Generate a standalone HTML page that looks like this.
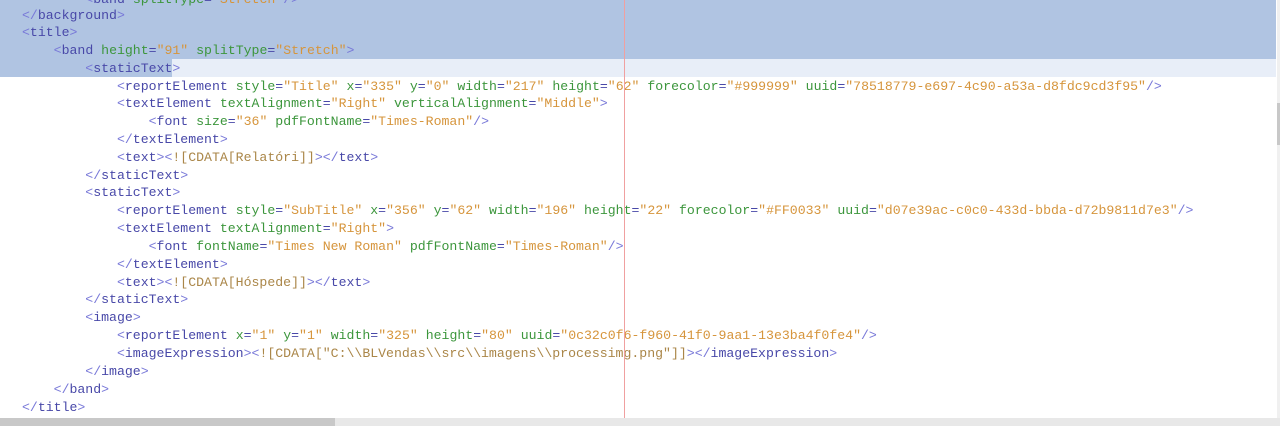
<!DOCTYPE html>
<html><head><meta charset="utf-8"><style>
html,body{margin:0;padding:0;width:1280px;height:426px;overflow:hidden;background:#fff;position:relative}
.sel{position:absolute;left:0;top:0;width:1276px;height:59px;background:#b0c4e2}
.sel2{position:absolute;left:0;top:59px;width:1276px;height:18px;background:#e8eef8}
.sel3{position:absolute;left:0;top:59px;width:172px;height:18px;background:#b0c4e2}
.l{position:absolute;left:22px;font-family:"Liberation Mono","Courier New",monospace;font-size:13.2px;line-height:18px;white-space:pre;color:#4848a8}
.b{color:#7878d8}.a{color:#3c963c}.v{color:#d6953c}.c{color:#aa8648}
.red{position:absolute;left:624px;top:0;width:1px;height:418px;background:#f0a0a0}
.hs{position:absolute;left:0;top:418px;width:1280px;height:8px;background:#e8e8e8}
.ht{position:absolute;left:0;top:418px;width:335px;height:8px;background:#c8c8c8}
.vs{position:absolute;left:1277px;top:0;width:3px;height:418px;background:#f0f0f0}
.vt{position:absolute;left:1277px;top:103px;width:3px;height:42px;background:#c8c8c8}
</style></head><body>
<div class="sel"></div><div class="sel2"></div><div class="sel3"></div>
<div class="l" style="top:-9px"><span class="b">        &lt;</span>band <span class="a">splitType</span>=<span class="v">"Stretch"</span><span class="b">/&gt;</span></div>
<div class="l" style="top:7px"><span class="b">&lt;/</span>background<span class="b">&gt;</span></div>
<div class="l" style="top:24px"><span class="b">&lt;</span>title<span class="b">&gt;</span></div>
<div class="l" style="top:42px"><span class="b">    &lt;</span>band <span class="a">height</span>=<span class="v">"91"</span> <span class="a">splitType</span>=<span class="v">"Stretch"</span><span class="b">&gt;</span></div>
<div class="l" style="top:60px"><span class="b">        &lt;</span>staticText<span class="b">&gt;</span></div>
<div class="l" style="top:78px"><span class="b">            &lt;</span>reportElement <span class="a">style</span>=<span class="v">"Title"</span> <span class="a">x</span>=<span class="v">"335"</span> <span class="a">y</span>=<span class="v">"0"</span> <span class="a">width</span>=<span class="v">"217"</span> <span class="a">height</span>=<span class="v">"62"</span> <span class="a">forecolor</span>=<span class="v">"#999999"</span> <span class="a">uuid</span>=<span class="v">"78518779-e697-4c90-a53a-d8fdc9cd3f95"</span><span class="b">/&gt;</span></div>
<div class="l" style="top:95px"><span class="b">            &lt;</span>textElement <span class="a">textAlignment</span>=<span class="v">"Right"</span> <span class="a">verticalAlignment</span>=<span class="v">"Middle"</span><span class="b">&gt;</span></div>
<div class="l" style="top:113px"><span class="b">                &lt;</span>font <span class="a">size</span>=<span class="v">"36"</span> <span class="a">pdfFontName</span>=<span class="v">"Times-Roman"</span><span class="b">/&gt;</span></div>
<div class="l" style="top:131px"><span class="b">            &lt;/</span>textElement<span class="b">&gt;</span></div>
<div class="l" style="top:149px"><span class="b">            &lt;</span>text<span class="b">&gt;&lt;</span><span class="c">![CDATA[Relatóri]]</span><span class="b">&gt;&lt;/</span>text<span class="b">&gt;</span></div>
<div class="l" style="top:167px"><span class="b">        &lt;/</span>staticText<span class="b">&gt;</span></div>
<div class="l" style="top:184px"><span class="b">        &lt;</span>staticText<span class="b">&gt;</span></div>
<div class="l" style="top:202px"><span class="b">            &lt;</span>reportElement <span class="a">style</span>=<span class="v">"SubTitle"</span> <span class="a">x</span>=<span class="v">"356"</span> <span class="a">y</span>=<span class="v">"62"</span> <span class="a">width</span>=<span class="v">"196"</span> <span class="a">height</span>=<span class="v">"22"</span> <span class="a">forecolor</span>=<span class="v">"#FF0033"</span> <span class="a">uuid</span>=<span class="v">"d07e39ac-c0c0-433d-bbda-d72b9811d7e3"</span><span class="b">/&gt;</span></div>
<div class="l" style="top:220px"><span class="b">            &lt;</span>textElement <span class="a">textAlignment</span>=<span class="v">"Right"</span><span class="b">&gt;</span></div>
<div class="l" style="top:238px"><span class="b">                &lt;</span>font <span class="a">fontName</span>=<span class="v">"Times New Roman"</span> <span class="a">pdfFontName</span>=<span class="v">"Times-Roman"</span><span class="b">/&gt;</span></div>
<div class="l" style="top:256px"><span class="b">            &lt;/</span>textElement<span class="b">&gt;</span></div>
<div class="l" style="top:274px"><span class="b">            &lt;</span>text<span class="b">&gt;&lt;</span><span class="c">![CDATA[Hóspede]]</span><span class="b">&gt;&lt;/</span>text<span class="b">&gt;</span></div>
<div class="l" style="top:291px"><span class="b">        &lt;/</span>staticText<span class="b">&gt;</span></div>
<div class="l" style="top:309px"><span class="b">        &lt;</span>image<span class="b">&gt;</span></div>
<div class="l" style="top:327px"><span class="b">            &lt;</span>reportElement <span class="a">x</span>=<span class="v">"1"</span> <span class="a">y</span>=<span class="v">"1"</span> <span class="a">width</span>=<span class="v">"325"</span> <span class="a">height</span>=<span class="v">"80"</span> <span class="a">uuid</span>=<span class="v">"0c32c0f6-f960-41f0-9aa1-13e3ba4f0fe4"</span><span class="b">/&gt;</span></div>
<div class="l" style="top:345px"><span class="b">            &lt;</span>imageExpression<span class="b">&gt;&lt;</span><span class="c">![CDATA["C:\\BLVendas\\src\\imagens\\processimg.png"]]</span><span class="b">&gt;&lt;/</span>imageExpression<span class="b">&gt;</span></div>
<div class="l" style="top:363px"><span class="b">        &lt;/</span>image<span class="b">&gt;</span></div>
<div class="l" style="top:381px"><span class="b">    &lt;/</span>band<span class="b">&gt;</span></div>
<div class="l" style="top:399px"><span class="b">&lt;/</span>title<span class="b">&gt;</span></div>
<div class="red"></div>
<div class="vs"></div><div class="vt"></div>
<div class="hs"></div><div class="ht"></div>
</body></html>
